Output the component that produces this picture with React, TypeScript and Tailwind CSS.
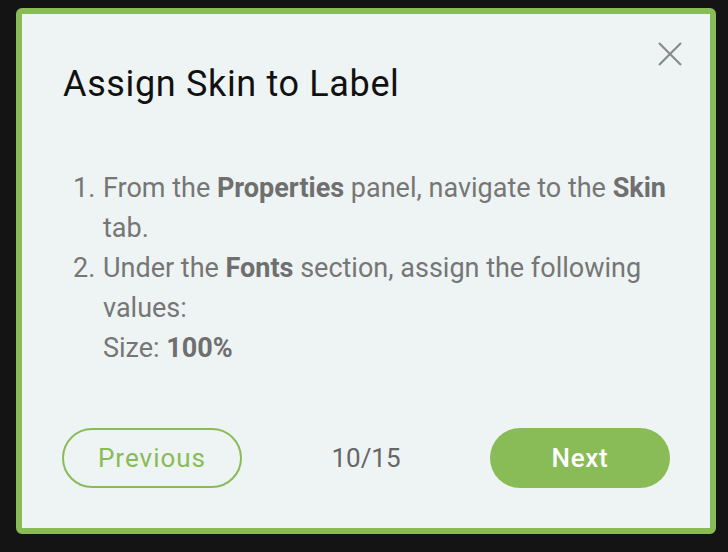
export default function App() {
  return (
    <div className="w-[728px] h-[552px] bg-[#141414] pt-2 pl-4 font-['Roboto',sans-serif]">
      <div className="w-[700px] h-[526px] rounded-md border-[6px] border-[#89bb56] bg-[#eef4f4]">
        <div className="relative h-full pl-10 pr-9 pt-[50px] pb-10 flex flex-col">
          <button className="absolute top-[28px] right-[28px]">
            <svg width="24" height="24" viewBox="0 0 24 24" fill="none" stroke="#8a8a8a" strokeWidth="2.2">
              <path d="M1 1 23 23M23 1 1 23" />
            </svg>
          </button>

          <h1 className="text-[36px] leading-10 tracking-[0.65px] text-[#111111] pl-[1px]">Assign Skin to Label</h1>

          <ol className="list-decimal pl-10 mt-16 text-[27px] leading-10 text-[#767676]">
            <li className="pl-[1px]">
              From the <b className="font-bold text-[#6f6f6f]">Properties</b> panel, navigate to the{' '}
              <b className="font-bold text-[#6f6f6f]">Skin</b> tab.
            </li>
            <li className="pl-[1px]">
              Under the <b className="font-bold text-[#6f6f6f]">Fonts</b> section, assign the following values:
              <br />
              Size: <b className="font-bold text-[#6f6f6f]">100%</b>
            </li>
          </ol>

          <div className="mt-auto mr-1 flex items-center justify-between">
            <button className="w-[180px] h-[60px] rounded-full border-2 border-[#89bb56] text-[#89bb56] text-[26px] tracking-[1px]">
              Previous
            </button>
            <span className="text-[26px] text-[#666666]">10/15</span>
            <button className="w-[180px] h-[60px] rounded-full bg-[#89bb56] text-white text-[26px] font-medium tracking-[0.7px]">
              Next
            </button>
          </div>
        </div>
      </div>
    </div>
  );
}
